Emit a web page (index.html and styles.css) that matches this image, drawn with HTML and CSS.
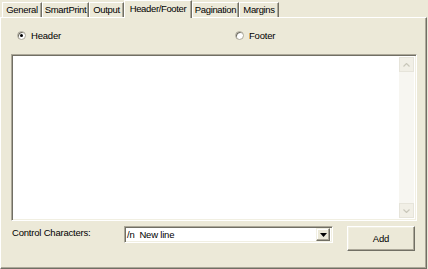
FILE: index.html
```html
<!DOCTYPE html>
<html lang="en">
<head>
  <meta charset="UTF-8" />
  <title>Page Setup - Header/Footer</title>
  <link rel="stylesheet" href="styles.css">
</head>
<body>
  <div class="dialog">
    <div class="tabs">
      <div class="tab tab-general">General</div>
      <div class="tab tab-smart">SmartPrint</div>
      <div class="tab tab-output">Output</div>
      <div class="tab tab-header active">Header/Footer</div>
      <div class="tab tab-pagination">Pagination</div>
      <div class="tab tab-margins">Margins</div>
    </div>

    <div class="panel">
      <div class="radio-row">
        <label class="radio-option"><span class="radio checked"></span>Header</label>
        <label class="radio-option footer-option"><span class="radio"></span>Footer</label>
      </div>

      <div class="editor">
        <div class="editor-text"></div>
        <div class="scrollbar">
          <div class="scroll-btn">
            <svg width="7" height="4" viewBox="0 0 7 4"><path d="M0.5 3.5 L3.5 0.5 L6.5 3.5" fill="none" stroke="#c9c7ba" stroke-width="1.2"/></svg>
          </div>
          <div class="scroll-track"></div>
          <div class="scroll-btn">
            <svg width="7" height="4" viewBox="0 0 7 4"><path d="M0.5 0.5 L3.5 3.5 L6.5 0.5" fill="none" stroke="#c9c7ba" stroke-width="1.2"/></svg>
          </div>
        </div>
      </div>

      <div class="control-row">
        <span class="control-label">Control Characters:</span>
        <div class="combo">
          <span class="combo-value">/n&nbsp; New line</span>
          <span class="combo-btn">
            <svg width="7" height="4" viewBox="0 0 7 4"><path d="M0 0 H7 L3.5 4 Z" fill="#000"/></svg>
          </span>
        </div>
        <button class="add-btn">Add</button>
      </div>
    </div>
  </div>
</body>
</html>
```

FILE: styles.css
```css
body {
  margin: 0;
  background-color: #ece9d8;
  font-family: "Liberation Sans", Arial, sans-serif;
  font-size: 9.5px;
  letter-spacing: -0.2px;
  color: #000;
}

.dialog {
  width: 428px;
  height: 269px;
  display: flex;
  flex-direction: column;
}

/* tab strip */
.tabs {
  display: flex;
  align-items: flex-end;
  height: 17px;
  padding-left: 2px;
}

.tab {
  height: 14px;
  line-height: 14px;
  text-align: center;
  letter-spacing: -0.35px;
  white-space: nowrap;
  border-top: 1px solid #fff;
  border-left: 1px solid #fff;
  border-right: 1px solid #716f64;
  box-shadow: inset -1px 0 0 #aca899;
  box-sizing: content-box;
}

.tab-general { width: 38px; }
.tab-smart { width: 45px; }
.tab-output { width: 33px; }
.tab-header { width: 66px; }
.tab-pagination { width: 45px; }
.tab-margins { width: 38px; }

.tab.active {
  height: 17px;
  line-height: 15px;
  margin-bottom: -1px;
  background: #ece9d8;
  position: relative;
  z-index: 1;
}

/* panel */
.panel {
  flex: 1;
  border-top: 1px solid #fff;
  border-left: 1px solid #fff;
  border-right: 1px solid #716f64;
  border-bottom: 1px solid #716f64;
  box-shadow: inset -1px -1px 0 #aca899;
  margin-right: 1px;
  padding: 12px 9px 0 10px;
  display: flex;
  flex-direction: column;
}

.radio-row {
  display: flex;
  height: 11px;
  padding-left: 6px;
}

.radio-option {
  display: flex;
  align-items: center;
  gap: 5px;
}

.footer-option {
  margin-left: 174px;
}

.radio {
  width: 9px;
  height: 9px;
  border-radius: 50%;
  background: #fff;
  border: 1px solid #aca899;
  box-shadow: inset 1px 1px 0 #716f64;
  box-sizing: border-box;
  display: flex;
  align-items: center;
  justify-content: center;
}

.radio.checked::after {
  content: "";
  width: 3px;
  height: 3px;
  border-radius: 50%;
  background: #000;
}

/* text box */
.editor {
  margin-top: 13px;
  height: 167px;
  width: 406px;
  box-sizing: border-box;
  border-top: 1px solid #aca899;
  border-left: 1px solid #aca899;
  border-right: 1px solid #fff;
  border-bottom: 1px solid #fff;
  box-shadow: inset 1px 1px 0 #716f64, inset -1px -1px 0 #f1efe2;
  background: #fff;
  display: flex;
  padding: 2px;
}

.editor-text {
  flex: 1;
}

.scrollbar {
  width: 15px;
  display: flex;
  flex-direction: column;
  background: #f7f6f1;
}

.scroll-btn {
  height: 15px;
  display: flex;
  align-items: center;
  justify-content: center;
  background: #f1efe6;
  border: 1px solid #e6e4da;
  box-sizing: border-box;
}

.scroll-track {
  flex: 1;
}

/* bottom controls */
.control-row {
  display: flex;
  align-items: flex-start;
  margin-top: 5px;
}

.control-label {
  width: 112px;
  padding-left: 1px;
  line-height: 13px;
}

.combo {
  width: 209px;
  height: 17px;
  box-sizing: border-box;
  background: #fff;
  border-top: 1px solid #aca899;
  border-left: 1px solid #aca899;
  border-right: 1px solid #fff;
  border-bottom: 1px solid #fff;
  box-shadow: inset 1px 1px 0 #716f64, inset -1px -1px 0 #f1efe2;
  display: flex;
  align-items: center;
  padding: 0 2px;
}

.combo-value {
  flex: 1;
}

.combo-btn {
  width: 14px;
  height: 13px;
  box-sizing: border-box;
  background: #ece9d8;
  border-top: 1px solid #f1efe2;
  border-left: 1px solid #f1efe2;
  border-right: 1px solid #716f64;
  border-bottom: 1px solid #716f64;
  box-shadow: inset -1px -1px 0 #aca899, inset 1px 1px 0 #fff;
  display: flex;
  align-items: center;
  justify-content: center;
}

.add-btn {
  margin-left: 14px;
  width: 68px;
  height: 25px;
  font: inherit;
  letter-spacing: inherit;
  color: #000;
  background: #ece9d8;
  border-top: 1px solid #fff;
  border-left: 1px solid #fff;
  border-right: 1px solid #716f64;
  border-bottom: 1px solid #716f64;
  box-shadow: inset -1px -1px 0 #aca899, inset 1px 1px 0 #f1efe2;
  padding: 0;
}
```
